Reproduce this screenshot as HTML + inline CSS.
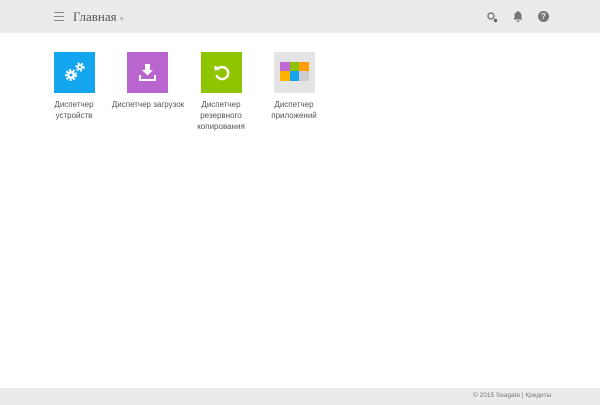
<!DOCTYPE html><html><head><meta charset="utf-8"><style>
body{margin:0;width:600px;height:405px;position:relative;background:#fff;font-family:"Liberation Sans",sans-serif;overflow:hidden}
.hd{position:absolute;left:0;top:0;width:600px;height:33px;background:#ebebeb}
.t{position:absolute;top:52px;width:41px;height:41px}
.l{position:absolute;top:99px;width:80px;text-align:center;font-size:8px;line-height:11px;color:#555}
.ft{position:absolute;left:0;top:388px;width:600px;height:17px;background:#ebebeb;font-size:6.5px;color:#777}
</style></head><body>
<div class="hd">
<div style="position:absolute;left:54px;top:12px;width:10px;height:1px;background:#888;box-shadow:0 4px #888,0 8px #888"></div>
<div style="position:absolute;left:73px;top:9px;font-family:'Liberation Serif',serif;font-size:13px;color:#555">Главная <span style="font-size:7px;color:#aaa">▾</span></div>
<svg style="position:absolute;left:486px;top:11px" width="12" height="12"><circle cx="5" cy="5" r="3" fill="none" stroke="#777" stroke-width="1.4"/><circle cx="9.5" cy="9.5" r="1.7" fill="#666"/></svg>
<svg style="position:absolute;left:512px;top:10px" width="12" height="12"><path d="M6 1a1 1 0 0 1 1 1c2 .5 2.5 2 2.5 4v2l1 1.5H1.5L2.5 8V6c0-2 .5-3.5 2.5-4a1 1 0 0 1 1-1z M4.5 10.5h3a1.5 1.5 0 0 1-3 0z" fill="#777"/></svg>
<div style="position:absolute;left:538px;top:11px;width:11px;height:11px;border-radius:50%;background:#777;color:#ebebeb;font-size:8px;font-weight:bold;text-align:center;line-height:11px">?</div>
</div>
<div class="t" style="left:54px;background:#13a6ee"><svg width="41" height="41"><g fill="#fff"><circle cx="17" cy="23" r="4"/><circle cx="26" cy="15" r="2.8"/></g><g stroke="#fff" stroke-width="2" stroke-dasharray="2 1.6"><circle cx="17" cy="23" r="5" fill="none"/><circle cx="26" cy="15" r="3.6" fill="none"/></g><circle cx="17" cy="23" r="1.5" fill="#13a6ee"/><circle cx="26" cy="15" r="1.1" fill="#13a6ee"/></svg></div>
<div class="t" style="left:127px;background:#b865cf"><svg width="41" height="41"><path d="M18 12h5v6h3l-5.5 5.5L15 18h3z" fill="#fff"/><path d="M13 23v5h15v-5" fill="none" stroke="#fff" stroke-width="2"/></svg></div>
<div class="t" style="left:201px;background:#8fc400"><svg width="41" height="41"><path d="M16 18a6 6 0 1 1-.5 5" fill="none" stroke="#fff" stroke-width="2.4"/><path d="M13 14l5 1-4 4z" fill="#fff"/></svg></div>
<div class="t" style="left:274px;background:#e4e4e4"><svg width="41" height="41"><rect x="6" y="10" width="10" height="9" fill="#c268d6"/><rect x="16" y="10" width="9" height="9" fill="#8bc100"/><rect x="25" y="10" width="10" height="9" fill="#ff9d00"/><rect x="6" y="19" width="10" height="10" fill="#ffb300"/><rect x="16" y="19" width="9" height="10" fill="#13a6ee"/><rect x="25" y="19" width="10" height="10" fill="#cdcdcd"/></svg></div>
<div class="l" style="left:34px">Диспетчер<br>устройств</div>
<div class="l" style="left:107px;width:82px">Диспетчер загрузок</div>
<div class="l" style="left:181px">Диспетчер<br>резервного<br>копирования</div>
<div class="l" style="left:254px">Диспетчер<br>приложений</div>
<div class="ft"><span style="position:absolute;left:473px;top:4px">© 2015 Seagate | Кредиты</span></div>
</body></html>
